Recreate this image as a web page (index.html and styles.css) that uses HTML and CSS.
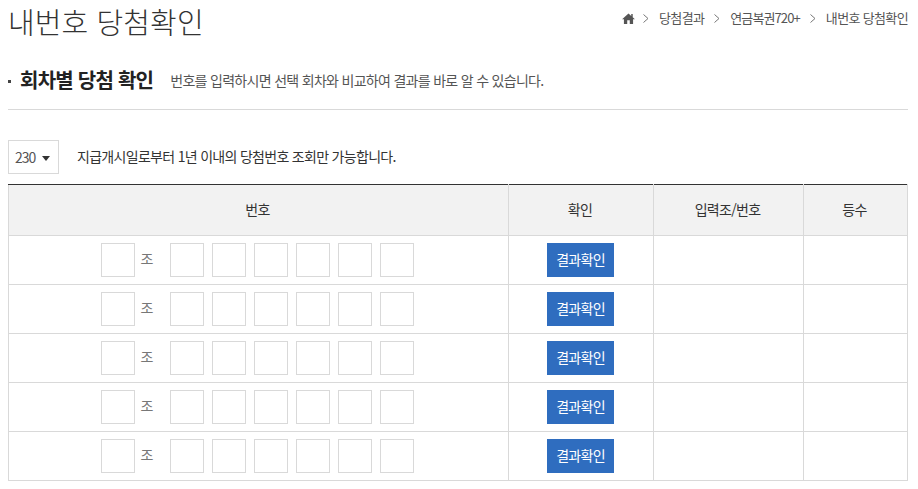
FILE: index.html
```html
<!DOCTYPE html>
<html lang="ko">
<head>
    <meta charset="UTF-8">
    <title>내번호 당첨확인</title>
    <link rel="stylesheet" href="styles.css">
</head>
<body>
    <header class="page-head">
        <h1>내번호 당첨확인</h1>
        <nav class="crumbs">
            <svg class="home" width="13" height="11" viewBox="0 0 14 12"><path d="M7 .5 0 6.800h2V12h3.600V8h2.800v4H12V6.800h2L11.600 4.600V1.200H10v2L7 .5z" fill="#555"/></svg>
            <svg class="sep" width="6" height="9" viewBox="0 0 6 9"><path d="M.5.5l4.500 4-4.500 4" fill="none" stroke="#777"/></svg>
            <a href="#">당첨결과</a>
            <svg class="sep" width="6" height="9" viewBox="0 0 6 9"><path d="M.5.5l4.500 4-4.500 4" fill="none" stroke="#777"/></svg>
            <a class="tight" href="#">연금복권720+</a>
            <svg class="sep" width="6" height="9" viewBox="0 0 6 9"><path d="M.5.5l4.500 4-4.500 4" fill="none" stroke="#777"/></svg>
            <a href="#">내번호 당첨확인</a>
        </nav>
    </header>

    <div class="section-head">
        <span class="dot"></span>
        <h2>회차별 당첨 확인</h2>
        <p>번호를 입력하시면 선택 회차와 비교하여 결과를 바로 알 수 있습니다.</p>
    </div>

    <div class="round-row">
        <div class="round-select">230<span class="arrow"></span></div>
        <p>지급개시일로부터 1년 이내의 당첨번호 조회만 가능합니다.</p>
    </div>

    <table class="check-table">
        <thead>
            <tr>
                <th class="col-num">번호</th>
                <th class="col-check">확인</th>
                <th class="col-input">입력조/번호</th>
                <th>등수</th>
            </tr>
        </thead>
        <tbody id="rows">
            <tr>
                <td><div class="num-inputs"><input type="text"><span class="jo">조</span><input type="text"><input type="text"><input type="text"><input type="text"><input type="text"><input type="text"></div></td>
                <td><button type="button">결과확인</button></td>
                <td></td>
                <td></td>
            </tr>
            <tr>
                <td><div class="num-inputs"><input type="text"><span class="jo">조</span><input type="text"><input type="text"><input type="text"><input type="text"><input type="text"><input type="text"></div></td>
                <td><button type="button">결과확인</button></td>
                <td></td>
                <td></td>
            </tr>
            <tr>
                <td><div class="num-inputs"><input type="text"><span class="jo">조</span><input type="text"><input type="text"><input type="text"><input type="text"><input type="text"><input type="text"></div></td>
                <td><button type="button">결과확인</button></td>
                <td></td>
                <td></td>
            </tr>
            <tr>
                <td><div class="num-inputs"><input type="text"><span class="jo">조</span><input type="text"><input type="text"><input type="text"><input type="text"><input type="text"><input type="text"></div></td>
                <td><button type="button">결과확인</button></td>
                <td></td>
                <td></td>
            </tr>
            <tr>
                <td><div class="num-inputs"><input type="text"><span class="jo">조</span><input type="text"><input type="text"><input type="text"><input type="text"><input type="text"><input type="text"></div></td>
                <td><button type="button">결과확인</button></td>
                <td></td>
                <td></td>
            </tr>
        </tbody>
    </table>
</body>
</html>
```

FILE: styles.css
```css
body {
    font-family: "Noto Sans CJK KR", "Noto Sans", sans-serif;
    margin: 0;
    padding: 0 10px 0 8px;
    background-color: #fff;
    color: #333;
    font-size: 14px;
    letter-spacing: -0.7px;
    overflow: hidden;
}
.page-head {
    display: flex;
    justify-content: space-between;
    align-items: flex-start;
    height: 69px;
}
.page-head h1 {
    margin: 0;
    font-size: 29px;
    font-weight: 300;
    line-height: 42px;
    letter-spacing: 0.1px;
    color: #333;
}
.crumbs {
    display: flex;
    align-items: flex-start;
    padding-top: 9px;
    font-size: 13px;
    line-height: 18px;
    letter-spacing: -0.65px;
}
.crumbs a {
    color: #555;
    text-decoration: none;
}
.crumbs a.tight {
    letter-spacing: -0.9px;
}
.crumbs .home {
    margin: 4px 8px 0 -1px;
}
.crumbs .sep {
    margin: 5px 10px 0 10px;
}
.crumbs .home + .sep {
    margin-left: 0;
}
.section-head {
    display: flex;
    align-items: center;
    height: 24px;
    padding-bottom: 16px;
    border-bottom: 1px solid #d9d9d9;
}
.section-head .dot {
    width: 3px;
    height: 3px;
    margin-right: 9px;
    background-color: #444;
}
.section-head h2 {
    margin: 0 17px 3px 0;
    font-size: 20px;
    font-weight: 700;
    letter-spacing: -0.75px;
    color: #222;
}
.section-head p {
    margin: 0 0 2px 0;
    color: #555;
}
.round-row {
    display: flex;
    align-items: center;
    margin-top: 30px;
    height: 34px;
}
.round-select {
    box-sizing: border-box;
    width: 51px;
    height: 34px;
    border: 1px solid #d9d9d9;
    padding-left: 6px;
    line-height: 32px;
    color: #555;
    letter-spacing: -1px;
}
.round-select .arrow {
    display: inline-block;
    margin-left: 7px;
    border-top: 5px solid #333;
    border-left: 4px solid transparent;
    border-right: 4px solid transparent;
    vertical-align: 2px;
}
.round-row p {
    margin: 0 0 2px 18px;
    color: #333;
}
.check-table {
    width: 900px;
    margin-top: 10px;
    border-collapse: collapse;
    table-layout: fixed;
    border-top: 1px solid #333;
}
.check-table th,
.check-table td {
    padding: 0;
    border: 1px solid #d9d9d9;
    text-align: center;
}
.check-table thead tr:first-child th {
    border-top: 1px solid #333;
}
.check-table th {
    height: 51px;
    padding: 0 2px 2px 0;
    box-sizing: border-box;
    background-color: #f2f2f2;
    font-weight: 400;
    color: #333;
}
.check-table td {
    height: 48px;
}
.col-num {
    width: 500px;
}
.col-check {
    width: 145px;
}
.col-input {
    width: 150px;
}
.num-inputs {
    display: flex;
    justify-content: center;
    align-items: center;
    gap: 8px;
    padding-right: 2px;
}
.num-inputs input {
    box-sizing: border-box;
    width: 34px;
    height: 34px;
    margin: 0;
    border: 1px solid #d9d9d9;
    background-color: #fff;
}
.num-inputs .jo {
    width: 13px;
    margin: 0 9px 5px -3px;
    color: #777;
}
.check-table button {
    display: block;
    width: 67px;
    height: 34px;
    margin: 0 0 0 38px;
    padding: 0 0 2px 0;
    border: none;
    background-color: #2f6dbf;
    color: #fff;
    font-family: inherit;
    font-size: 14px;
    letter-spacing: -0.7px;
}
```
